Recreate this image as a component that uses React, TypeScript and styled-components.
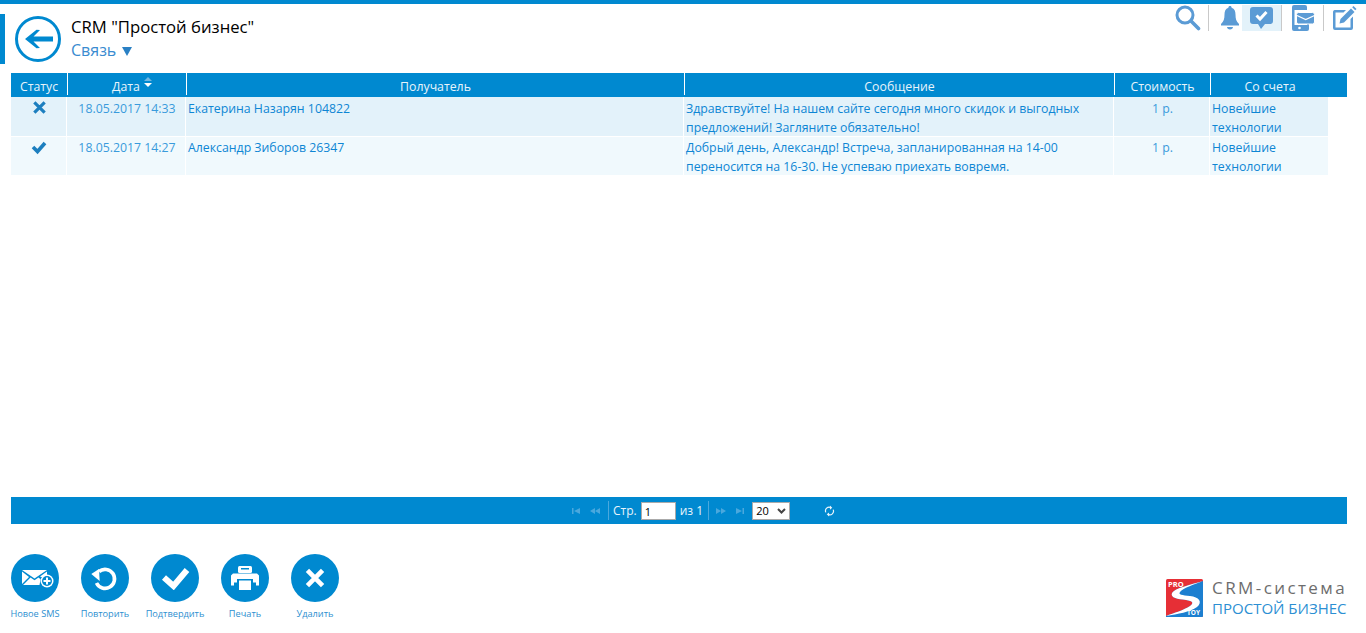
import React from 'react'
import styled, { createGlobalStyle } from 'styled-components'

const BLUE = '#0089d0'
const ICON = '#5b9bd5'
const FONT = '"Open Sans", "Noto Sans", sans-serif'

const GlobalStyle = createGlobalStyle`
  html, body { margin: 0; padding: 0; background: #fff; }
  body { font-family: ${FONT}; font-size: 12px; color: #0e86d4; }
`

const Page = styled.div`
  width: 1366px;
  height: 633px;
  box-sizing: border-box;
  border-top: 4px solid ${BLUE};
  display: flex;
  flex-direction: column;
  overflow: hidden;
`

const Header = styled.header`
  height: 69px;
  display: flex;
  justify-content: space-between;
  align-items: flex-start;
`

const HeaderLeft = styled.div`
  display: flex;
  align-items: flex-start;
  margin-top: 10px;
`

const Accent = styled.div`
  width: 5px;
  height: 50px;
  background: ${BLUE};
  margin-right: 10px;
`

const BackCircle = styled.svg`
  width: 46px;
  height: 46px;
  margin-top: 2px;
  margin-right: 10px;
`

const Titles = styled.div`
  display: flex;
  flex-direction: column;
  margin-top: 1px;
`

const Title = styled.div`
  font-size: 16.7px;
  line-height: 23px;
  color: #000;
`

const Subtitle = styled.div`
  font-size: 16px;
  line-height: 24px;
  color: #3a8bd0;
  display: flex;
  align-items: center;
  gap: 6px;
`

const Caret = styled.span`
  width: 0;
  height: 0;
  margin-top: 3px;
  border-left: 5px solid transparent;
  border-right: 5px solid transparent;
  border-top: 9px solid #2a80c4;
`

const TopIcons = styled.div`
  display: flex;
  align-items: flex-start;
  margin-top: 1px;
  margin-right: 9px;
`

const TopSlot = styled.div<{ $w: number; $active?: boolean; $pl?: number; $pr?: number }>`
  width: ${p => p.$w}px;
  height: 26px;
  box-sizing: border-box;
  padding: 0 ${p => p.$pr ?? 0}px 0 ${p => p.$pl ?? 0}px;
  display: flex;
  justify-content: center;
  align-items: center;
  background: ${p => (p.$active ? '#e3f2fa' : 'transparent')};
`

const TopSep = styled.div`
  width: 1px;
  height: 26px;
  background: #c9c9c9;
`

const TableWrap = styled.div`
  margin: 0 19px 0 11px;
  flex: 1;
  display: flex;
  flex-direction: column;
`

const HeadRow = styled.div`
  height: 24px;
  background: ${BLUE};
  display: flex;
`

const HeadCell = styled.div<{ $w: number; $last?: boolean; $pl?: number }>`
  flex: none;
  width: ${p => p.$w}px;
  height: 22px;
  box-sizing: border-box;
  padding-left: ${p => p.$pl ?? 0}px;
  border-right: ${p => (p.$last ? 'none' : '1px solid #fff')};
  color: #e8f4fb;
  font-size: 12.3px;
  line-height: 27px;
  text-align: center;
  white-space: nowrap;
`

const SortMark = styled.span`
  display: inline-block;
  width: 0;
  margin-left: 4px;
  vertical-align: 4px;
  position: relative;
  height: 9px;
  &::before, &::after {
    content: '';
    position: absolute;
    left: 0;
    border-left: 4px solid transparent;
    border-right: 4px solid transparent;
  }
  &::before { top: -1px; border-bottom: 4px solid #6fb6e2; }
  &::after { top: 5px; border-top: 4px solid #fff; }
`

const Row = styled.div<{ $odd?: boolean }>`
  width: 1317px;
  height: 39px;
  margin-bottom: 1px;
  display: flex;
  gap: 1px;
  &:last-child { height: 38px; }
  & > div { background: ${p => (p.$odd ? '#e3f2fa' : '#f0f9fd')}; }
`

const Cell = styled.div<{ $w: number; $center?: boolean; $top: number }>`
  flex: none;
  width: ${p => p.$w}px;
  box-sizing: border-box;
  padding: ${p => p.$top}px 2px 0;
  font-size: 12.3px;
  line-height: 19px;
  color: #0e86d4;
  white-space: nowrap;
  text-align: ${p => (p.$center ? 'center' : 'left')};
`

const MutedCell = styled(Cell)`
  color: #3a9bdc;
  text-indent: 2px;
`

const StatusCell = styled(Cell)`
  padding-left: 3px;
  display: flex;
  justify-content: center;
  align-items: flex-start;
`

const Pager = styled.div`
  height: 27px;
  margin: 0 19px 0 11px;
  background: ${BLUE};
  display: flex;
  align-items: center;
  padding-left: 559px;
  color: #e8f4fb;
  font-size: 12px;
`

const PagerIcon = styled.svg<{ $flip?: boolean }>`
  width: 12px;
  height: 8px;
  margin-right: 7px;
  transform: ${p => (p.$flip ? 'scaleX(-1)' : 'none')};
`

const PagerSep = styled.div<{ $ml?: number; $mr?: number }>`
  width: 1px;
  height: 19px;
  background: #4aa8dd;
  margin-left: ${p => p.$ml ?? 0}px;
  margin-right: ${p => p.$mr ?? 4}px;
`

const PageInput = styled.div`
  width: 30px;
  height: 16px;
  margin: 0 4px 0 4px;
  background: #fff;
  border: 1px solid #aaa;
  color: #000;
  font-size: 11px;
  line-height: 17px;
  padding-left: 3px;
`

const PageSize = styled.div`
  width: 33px;
  height: 16px;
  margin: 0 0 0 -1px;
  padding: 0 0 0 3px;
  background: #fff;
  border: 1px solid #aaa;
  color: #000;
  font-size: 11px;
  line-height: 15px;
  display: flex;
  justify-content: space-between;
  align-items: center;
`

const SizeArrow = styled.svg`
  margin-right: 3px;
`

const RefreshIcon = styled.svg`
  margin-left: 34px;
`

const Footer = styled.footer`
  height: 109px;
  display: flex;
  justify-content: space-between;
  align-items: flex-start;
`

const Actions = styled.div`
  display: flex;
  margin-top: 30px;
`

const Action = styled.div`
  width: 70px;
  display: flex;
  flex-direction: column;
  align-items: center;
`

const ActionCircle = styled.div`
  width: 48px;
  height: 48px;
  border-radius: 50%;
  background: ${BLUE};
  display: flex;
  align-items: center;
  justify-content: center;
`

const ActionLabel = styled.div`
  margin-top: 5px;
  font-size: 9.2px;
  line-height: 14px;
  color: #2d8fd0;
  white-space: nowrap;
`

const Brand = styled.div`
  display: flex;
  align-items: flex-start;
  margin: 55px 19px 0 0;
  gap: 9px;
`

const BrandText = styled.div`
  display: flex;
  flex-direction: column;
  margin-top: -2px;
`

const BrandTop = styled.div`
  font-size: 17px;
  line-height: 21px;
  letter-spacing: 2.4px;
  color: #6d6d6d;
  white-space: nowrap;
`

const BrandBottom = styled.div`
  font-size: 15px;
  line-height: 21px;
  color: #2c8fd3;
  white-space: nowrap;
`

const rows = [
  {
    status: 'fail',
    date: '18.05.2017 14:33',
    to: 'Екатерина Назарян 104822',
    message: ['Здравствуйте! На нашем сайте сегодня много скидок и выгодных', 'предложений! Загляните обязательно!'],
    top: 2,
  },
  {
    status: 'ok',
    date: '18.05.2017 14:27',
    to: 'Александр Зиборов 26347',
    message: ['Добрый день, Александр! Встреча, запланированная на 14-00', 'переносится на 16-30. Не успеваю приехать вовремя.'],
    top: 1,
  },
]

const CrossIcon = ({ size, color }: { size: number; color: string }) => (
  <svg width={size} height={size} viewBox="0 0 16 16">
    <path d="M2.500 2.500l11 11M13.500 2.500l-11 11" stroke={color} strokeWidth="3.400" fill="none" />
  </svg>
)

const CheckIcon = ({ size, color }: { size: number; color: string }) => (
  <svg width={size} height={size} viewBox="0 0 16 16">
    <path d="M2 8l4.500 4.500L14 4" stroke={color} strokeWidth="3.600" fill="none" />
  </svg>
)

const SkipIcon = ({ flip, double }: { flip?: boolean; double?: boolean }) => (
  <PagerIcon viewBox="0 0 12 8" $flip={flip}>
    {double ? (
      <path d="M6 1v6L1 4zM11 1v6L6 4z" fill="#4aa8dd" />
    ) : (
      <path d="M2 1h1.500v6H2zM10 1v6L4 4z" fill="#4aa8dd" />
    )}
  </PagerIcon>
)

export default function App() {
  return (
    <Page>
      <GlobalStyle />
      <Header>
        <HeaderLeft>
          <Accent />
          <BackCircle viewBox="0 0 46 46">
            <circle cx="23" cy="23" r="21.500" fill="none" stroke={BLUE} strokeWidth="3" />
            <path d="M38 20.500H18.500l6.500-6.500-3.500-.2L10 23l11.500 9.200 3.500-.2-6.500-6.500H38z" fill={BLUE} />
          </BackCircle>
          <Titles>
            <Title>CRM "Простой бизнес"</Title>
            <Subtitle>
              Связь
              <Caret />
            </Subtitle>
          </Titles>
        </HeaderLeft>
        <TopIcons>
          <TopSlot $w={33} $pr={7}>
            <svg width="26" height="26" viewBox="0 0 26 26">
              <circle cx="10" cy="10" r="8" fill="none" stroke={ICON} strokeWidth="3" />
              <path d="M16 16l7.500 7.500" stroke={ICON} strokeWidth="3.600" strokeLinecap="round" />
            </svg>
          </TopSlot>
          <TopSep />
          <TopSlot $w={33} $pl={9}>
            <svg width="20" height="26" viewBox="0 0 20 26">
              <path d="M10 1c1 0 1.600.7 1.600 1.700 3 .9 3.900 3.500 3.900 6.800 0 4.500.8 7 3.500 9.500v1.500H1V19c2.700-2.500 3.500-5 3.500-9.500 0-3.300.9-5.900 3.900-6.800C8.400 1.700 9 1 10 1z" fill={ICON} />
              <path d="M7 22h6c0 1.500-1.300 2.500-3 2.500S7 23.500 7 22z" fill={ICON} />
            </svg>
          </TopSlot>
          <TopSlot $w={39} $active>
            <svg width="25" height="24" viewBox="0 0 25 24">
              <path d="M4 1h17a3 3 0 0 1 3 3v11a3 3 0 0 1-3 3h-5l-4 5-3-5H4a3 3 0 0 1-3-3V4a3 3 0 0 1 3-3z" fill={ICON} />
              <path d="M7.500 9.500l3.500 3.500 6.500-7" stroke="#fff" strokeWidth="3" fill="none" />
            </svg>
          </TopSlot>
          <TopSep />
          <TopSlot $w={41}>
            <svg width="24" height="26" viewBox="0 0 24 26">
              <path d="M3 0h11a2 2 0 0 1 2 2v3H3.500v15H16v-1h2v5a2 2 0 0 1-2 2H3a2 2 0 0 1-2-2V2a2 2 0 0 1 2-2z" fill={ICON} />
              <rect x="5.500" y="7.500" width="18" height="11.500" rx="2" fill={ICON} stroke="#fff" strokeWidth="1" />
              <path d="M6 10.500l8.700 4 8.800-4" stroke="#fff" strokeWidth="1.300" fill="none" />
              <circle cx="8.500" cy="23" r="1.300" fill="#fff" />
            </svg>
          </TopSlot>
          <TopSep />
          <TopSlot $w={33} $pl={7}>
            <svg width="25" height="26" viewBox="0 0 25 26">
              <path d="M2.500 5H14l-2.500 2.500H3.500v15h15V14l2.500-2.500V23a2 2 0 0 1-2 2H3a2 2 0 0 1-2-2V7a2 2 0 0 1 1.500-2z" fill={ICON} />
              <path d="M7.500 18.500l1-4.500L19 3.500 22.500 7 12 17.500z" fill={ICON} />
              <path d="M20.200 2.300L21.500 1l3 3-1.300 1.300z" fill={ICON} />
            </svg>
          </TopSlot>
        </TopIcons>
      </Header>

      <TableWrap>
        <HeadRow>
          <HeadCell $w={57}>Статус</HeadCell>
          <HeadCell $w={119} $pl={2}>
            Дата<SortMark />
          </HeadCell>
          <HeadCell $w={498}>Получатель</HeadCell>
          <HeadCell $w={430}>Сообщение</HeadCell>
          <HeadCell $w={96}>Стоимость</HeadCell>
          <HeadCell $w={118} $last>Со счета</HeadCell>
        </HeadRow>
        {rows.map((row, i) => (
          <Row key={row.date} $odd={i === 0}>
            <StatusCell $w={55} $top={row.top + 1}>
              {row.status === 'fail' ? <CrossIcon size={15} color="#1d7fbf" /> : <CheckIcon size={16} color="#1d7fbf" />}
            </StatusCell>
            <MutedCell $w={118} $center $top={row.top}>{row.date}</MutedCell>
            <Cell $w={497} $top={row.top}>{row.to}</Cell>
            <Cell $w={429} $top={row.top}>
              {row.message[0]}
              <br />
              {row.message[1]}
            </Cell>
            <MutedCell $w={95} $center $top={row.top}>1 р.</MutedCell>
            <Cell $w={118} $top={row.top}>
              Новейшие
              <br />
              технологии
            </Cell>
          </Row>
        ))}
      </TableWrap>

      <Pager>
        <SkipIcon />
        <SkipIcon double />
        <PagerSep />
        Стр.
        <PageInput>1</PageInput>
        из 1
        <PagerSep $ml={5} $mr={6} />
        <SkipIcon flip double />
        <SkipIcon flip />
        <PageSize>
          20
          <SizeArrow width="9" height="6" viewBox="0 0 9 6">
            <path d="M1 1l3.500 3.500L8 1" stroke="#444" strokeWidth="2" fill="none" />
          </SizeArrow>
        </PageSize>
        <RefreshIcon width="11" height="12" viewBox="0 0 12 12">
          <path d="M2 7.500A4 4 0 0 1 7.500 2.300M10 4.500a4 4 0 0 1-5.500 5.200" stroke="#e8f4fb" strokeWidth="1.300" fill="none" />
          <path d="M6.500 0l2.500 2.500L6.500 4.500zM5.500 7.500L3 9.500l2.500 2.500z" fill="#e8f4fb" />
        </RefreshIcon>
      </Pager>

      <Footer>
        <Actions>
          <Action>
            <ActionCircle>
              <svg width="40" height="30" viewBox="0 0 40 30">
                <path d="M7 7h25L19.500 15.500z" fill="#fff" />
                <path d="M7 8.500l7 5.500-7 7zM32 8.500V13l-3 2-4-1.500zM8 22l7.500-7.500 4 2.800 4-2.800 2 1.800-1 5.700z" fill="#fff" />
                <circle cx="32" cy="18" r="6.500" fill="#fff" />
                <circle cx="32" cy="18" r="5" fill={BLUE} />
                <path d="M32 14.500v7M28.500 18h7" stroke="#fff" strokeWidth="2" />
              </svg>
            </ActionCircle>
            <ActionLabel>Новое SMS</ActionLabel>
          </Action>
          <Action>
            <ActionCircle>
              <svg width="28" height="28" viewBox="0 0 28 28">
                <path d="M8 7.500A9.500 9.500 0 1 1 5.500 19" stroke="#fff" strokeWidth="3.600" fill="none" />
                <path d="M.3 10L8 5l.7 12z" fill="#fff" />
              </svg>
            </ActionCircle>
            <ActionLabel>Повторить</ActionLabel>
          </Action>
          <Action>
            <ActionCircle>
              <svg width="30" height="24" viewBox="0 0 30 24">
                <path d="M4 11.500l9.500 8.500L27 4" stroke="#fff" strokeWidth="6" fill="none" />
              </svg>
            </ActionCircle>
            <ActionLabel>Подтвердить</ActionLabel>
          </Action>
          <Action>
            <ActionCircle>
              <svg width="30" height="26" viewBox="0 0 30 26">
                <rect x="8" y="1" width="14" height="7" rx="1.500" fill="#fff" />
                <rect x="11" y="3" width="8" height="1.500" fill={BLUE} />
                <path d="M3 8.500h24l2 2v10h-3v-3H4v3H1v-10z" fill="#fff" />
                <rect x="7" y="14" width="16" height="4" fill={BLUE} />
                <rect x="9" y="15.500" width="12" height="9.500" fill="#fff" />
              </svg>
            </ActionCircle>
            <ActionLabel>Печать</ActionLabel>
          </Action>
          <Action>
            <ActionCircle>
              <CrossIcon size={22} color="#fff" />
            </ActionCircle>
            <ActionLabel>Удалить</ActionLabel>
          </Action>
        </Actions>
        <Brand>
          <svg width="37" height="38" viewBox="0 0 37 38">
            <rect width="37" height="38" rx="1.500" fill="#e62f36" />
            <path d="M37 2C24 6 9 9 6 14c-2 5 6 6 14 7 7 1 8 3 4 6-6 4-16 7-24 10v1h36a1 1 0 0 0 1-1z" fill="#1c7fd0" />
            <path d="M37 2C24 6 9 9 6 14c-2 5 6 6 14 7 7 1 8 3 4 6-6 4-16 7-24 10 12-2 24-4 31-9 6-5 2-10-7-11-8-1-12-1-10-4C17 9 29 5 37 2z" fill="#fff" />
            <text x="2" y="8" fontFamily={FONT} fontSize="7.500" fontWeight="700" fill="#fff">PRO</text>
            <text x="21" y="36" fontFamily={FONT} fontSize="6.500" fontWeight="700" fill="#fff">TOY</text>
          </svg>
          <BrandText>
            <BrandTop>CRM-система</BrandTop>
            <BrandBottom>ПРОСТОЙ БИЗНЕС</BrandBottom>
          </BrandText>
        </Brand>
      </Footer>
    </Page>
  )
}
